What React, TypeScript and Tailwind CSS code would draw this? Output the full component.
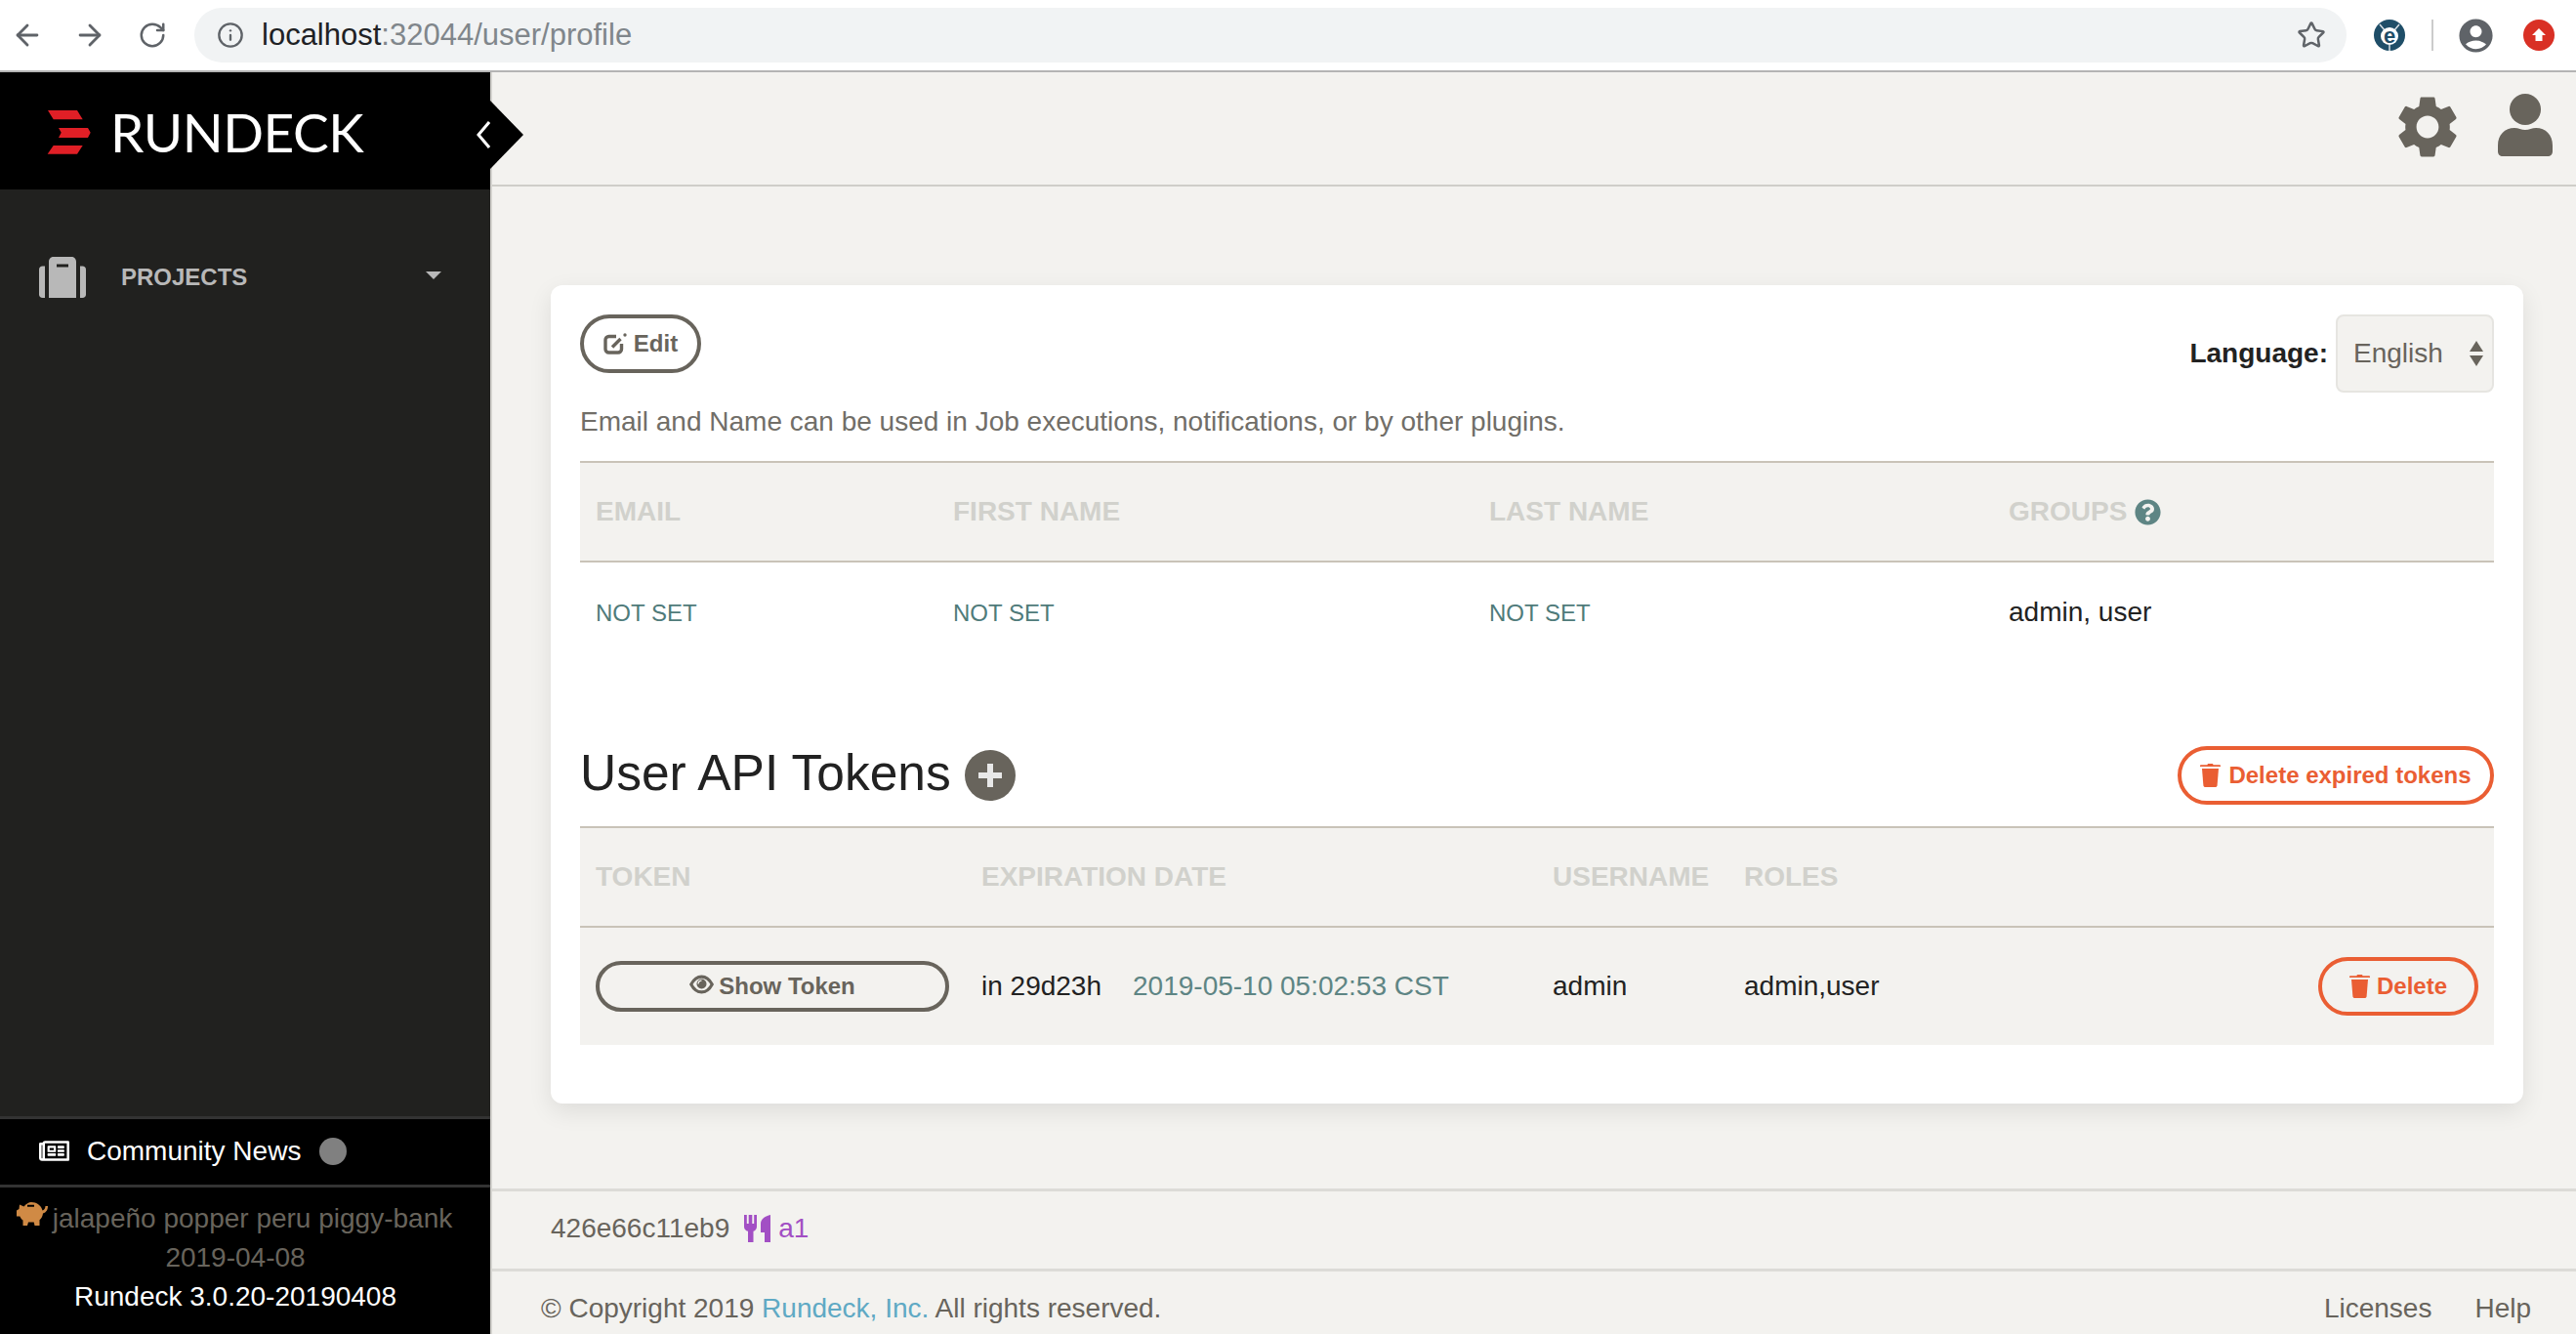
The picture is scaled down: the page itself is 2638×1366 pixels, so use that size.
import React from 'react';
import { ArrowLeft, ArrowRight, RotateCw, Info, Star } from 'lucide-react';
import { MdAccountCircle, MdSettings } from 'react-icons/md';
import { FaRegNewspaper, FaQuestionCircle } from 'react-icons/fa';

// Small inline icons the icon packages have no close match for
const TrashIcon: React.FC<{ className?: string }> = ({ className }) => (
  <svg viewBox="0 0 21 24" className={className} fill="currentColor">
    <path d="M7.5 1.2C7.5.5 8 0 8.7 0h3.6c.7 0 1.2.5 1.2 1.2h6.4c.6 0 1.100.4 1.100 1v.8H0v-.8c0-.6.500-1 1.100-1z" />
    <path d="M2 5h17l-1.400 17.200c-.1 1-1 1.800-2 1.800H5.400c-1 0-1.900-.8-2-1.800z" />
  </svg>
);

const EyeIcon: React.FC<{ className?: string }> = ({ className }) => (
  <svg viewBox="0 0 26 20" className={className}>
    <path d="M1.800 10C5 4 9 1.800 13 1.800S21 4 24.200 10C21 16 17 18.200 13 18.200S5 16 1.800 10z" fill="none" stroke="currentColor" strokeWidth="3.200" />
    <circle cx="13" cy="9.500" r="5.200" fill="currentColor" />
    <path d="M9.500 9.500a3.500 3.500 0 0 1 3.500-3.500" fill="none" stroke="#f3f2ef" strokeWidth="1.400" />
  </svg>
);

const EditIcon = () => (
  <svg viewBox="0 0 24 22" className="w-[24px] h-[22px]" fill="none" stroke="currentColor">
    <path d="M13 3.500H5.500a3.500 3.500 0 0 0-3.500 3.500v9.500a3.500 3.500 0 0 0 3.500 3.500H15a3.500 3.500 0 0 0 3.500-3.500V11" strokeWidth="3.400" />
    <path d="M9 14.500l8.500-8.500" strokeWidth="3.400" />
    <circle cx="22" cy="2" r="1.700" fill="currentColor" stroke="none" />
  </svg>
);

const SuitcaseIcon = () => (
  <svg viewBox="0 0 48 42" className="w-[48px] h-[42px]" fill="#b8b8b8">
    <path d="M0 13c0-2 1.500-3.500 3.500-3.500H6V42H3.500C1.500 42 0 40.500 0 38.500z" />
    <path d="M42 9.500h2.500c2 0 3.500 1.500 3.500 3.500v25.500c0 2-1.500 3.500-3.500 3.500H42z" />
    <path fillRule="evenodd" d="M10 5c0-2.800 2-5 4.500-5h19C36 0 38 2.200 38 5v37H10zM18 7.500v3h12v-3z" />
  </svg>
);

const UserIcon = () => (
  <svg viewBox="0 0 56 64" className="w-[56px] h-[64px]" fill="#68645c">
    <circle cx="28" cy="16" r="16" />
    <path d="M0 53c0-11 7-18 17-18 4 0 7 2 11 2s7-2 11-2c10 0 17 7 17 18v6c0 3-2 5-5 5H5c-3 0-5-2-5-5z" />
  </svg>
);

const CutleryIcon = () => (
  <svg viewBox="0 0 27 28" className="w-[27px] h-[28px]" fill="#a24fc4">
    <path d="M0 0h2.800v9h1.900V0h3.600v9h1.900V0H13v12c0 2.500-1.500 4.200-3.500 4.800V28H4V16.800C1.500 16.200 0 14.500 0 12z" />
    <path d="M27 0v28h-6V18h-4V9c0-5 5-8 10-9z" />
  </svg>
);

const PigIcon = () => (
  <svg viewBox="0 0 32 24" className="w-[32px] h-[24px]" fill="#d08a45">
    <path
      fillRule="evenodd"
      d="M3 2.500l4.500 2C10 1.500 12.500 0 15 0c5.500 0 10 3 11.500 8.500 1.800-.5 2.800-2 3-4.500L32 4c0 3.500-1.500 6.500-5 7.500-.3 3-1.700 5.200-3.500 6.700V24h-5l-.8-3.500H12L11 24H6.500v-5.500C5 17.500 4 16 3.300 14.500H0V8.500l2.500-1.500zM11 2.800v2h7v-2z"
    />
  </svg>
);

const TableHead: React.FC<{ children: React.ReactNode }> = ({ children }) => (
  <div className="px-4 text-[28px] font-bold text-[#d1d1cc] flex items-center gap-[10px]">{children}</div>
);

const PillButton: React.FC<{ danger?: boolean; className?: string; children: React.ReactNode }> = ({ danger, className, children }) => (
  <button
    type="button"
    className={`flex items-center justify-center rounded-full border-[4px] text-[24px] font-bold ${
      danger ? 'border-[#ea5e33] text-[#ea5e33]' : 'border-[#68645c] text-[#68645c]'
    } ${className}`}
  >
    {children}
  </button>
);

const BrowserBar = () => (
  <div className="h-[74px] bg-white border-b-2 border-[#b4b4b4] flex items-center text-[#5f6368] shrink-0">
    <ArrowLeft size={34} strokeWidth={2} className="ml-[11px]" />
    <ArrowRight size={34} strokeWidth={2} className="ml-[30px]" />
    <RotateCw size={30} strokeWidth={2} className="ml-[32px]" />
    <div className="ml-[28px] w-[1002px] flex-1 h-[56px] bg-[#f1f3f4] rounded-full flex items-center">
      <Info size={28} strokeWidth={2} className="ml-[23px]" />
      <span className="ml-[18px] text-[31px] text-[#80868b]">
        <span className="text-[#202124]">localhost</span>:32044/user/profile
      </span>
      <Star size={30} strokeWidth={2} className="ml-auto mr-[21px]" />
    </div>
    <svg viewBox="0 0 32 32" className="w-[32px] h-[32px] ml-[28px]">
      <circle cx="16" cy="16" r="16" fill="#1f4e68" />
      <path d="M6 5l5 6M26 5l-5 6M16 26v6" stroke="#d7dfe4" strokeWidth="1.500" />
      <circle cx="16" cy="17" r="9" fill="#fff" />
      <text x="16" y="24" textAnchor="middle" fontSize="22" fontWeight="700" fontFamily="Liberation Sans" fill="#1f4e68">e</text>
    </svg>
    <div className="w-[2px] h-[32px] bg-[#cccccc] ml-[27px]" />
    <MdAccountCircle size={41} className="ml-[23px]" />
    <div className="ml-[28px] mr-[22px] w-[32px] h-[32px] rounded-full bg-[#d93025] flex items-center justify-center">
      <svg viewBox="0 0 16 16" className="w-[16px] h-[16px]" fill="#fff">
        <path d="M8 1l7 7h-3.500v6h-7V8H1z" />
      </svg>
    </div>
  </div>
);

const Sidebar = () => (
  <aside className="w-[502px] shrink-0 bg-[#21211f] flex flex-col relative">
    <div className="h-[120px] bg-black flex items-center shrink-0">
      <svg viewBox="0 0 45 45" className="w-[45px] h-[45px] ml-[48px] mt-[2px]" fill="#e01f26">
        <polygon points="1,0 31,0 36.700,9.300 6.700,9.300" />
        <polygon points="12,18 42,18 44.700,22.700 42,28 12,28 14.700,22.700" />
        <polygon points="6.700,36 36.700,36 31,44.700 0.700,44.700" />
      </svg>
      <span className="ml-[20px] mt-[2px] text-[55px] leading-none text-white font-['Lato',sans-serif] tracking-[-0.5px]">RUNDECK</span>
    </div>
    {/* collapse notch overlapping the top bar */}
    <svg viewBox="0 0 34 70" className="absolute left-[502px] top-[29px] w-[34px] h-[70px] z-10">
      <polygon points="0,0 34,35 0,70" fill="#000" />
    </svg>
    <svg viewBox="0 0 14 30" className="absolute left-[488px] top-[49px] w-[14px] h-[30px] z-20" fill="none" stroke="#fff" strokeWidth="3">
      <polyline points="13,2 2,15 13,28" />
    </svg>

    <div className="flex-1 flex items-start pl-[40px] pt-[69px] pr-[50px]">
      <SuitcaseIcon />
      <span className="ml-[36px] mt-[7px] text-[24px] leading-[28px] font-bold text-[#b8b8b8]">PROJECTS</span>
      <div className="ml-auto mt-[15px] w-0 h-0 border-x-[8px] border-x-transparent border-t-[8px] border-t-[#b8b8b8]" />
    </div>

    <div className="bg-black shrink-0">
      <div className="h-[70px] border-t-[3px] border-[#333333] flex items-center pl-[40px] pb-[2px]">
        <FaRegNewspaper size={31} color="#fff" />
        <span className="ml-[18px] text-[28px] text-white">Community News</span>
        <span className="ml-[19px] w-[28px] h-[28px] rounded-full bg-[#808080]" />
      </div>
      <div className="h-[153px] border-t-[3px] border-[#333333] pt-[12px] text-[28px] leading-[40px] text-center">
        <div className="text-[#68645c] relative pl-[15px]">
          <span className="absolute left-[17px] top-[3px]"><PigIcon /></span>
          jalapeño popper peru piggy-bank
        </div>
        <div className="text-[#68645c] -ml-[20px]">2019-04-08</div>
        <div className="text-white -ml-[20px]">Rundeck 3.0.20-20190408</div>
      </div>
    </div>
  </aside>
);

const Profile = () => (
  <section className="w-[2020px] ml-[60px] h-[838px] bg-white rounded-[12px] shadow-[0_8px_24px_rgba(0,0,0,0.09)] pt-[30px] px-[30px] shrink-0">
    <div className="h-[80px] flex items-start justify-between">
      <PillButton className="w-[124px] h-[60px] gap-[7px]">
        <EditIcon />
        Edit
      </PillButton>
      <div className="flex items-center gap-[8px]">
        <span className="text-[28px] font-bold text-[#222222]">Language:</span>
        <div className="w-[162px] h-[80px] bg-[#f3f2ef] border-2 border-[#e6e5e1] rounded-[8px] flex items-center pl-[16px] pr-[9px] justify-between">
          <span className="text-[28px] text-[#68645c]">English</span>
          <svg viewBox="0 0 14 26" className="w-[14px] h-[26px]" fill="#68645c">
            <polygon points="7,0 14,11 0,11" />
            <polygon points="0,15 14,15 7,26" />
          </svg>
        </div>
      </div>
    </div>
    <p className="mt-[11px] text-[28px] leading-[38px] text-[#716e68]">
      Email and Name can be used in Job executions, notifications, or by other plugins.
    </p>

    <div className="mt-[21px] grid grid-cols-[366px_549px_532px_513px] h-[104px] bg-[#f3f2ef] border-y-2 border-[#c9c3b8]">
      <TableHead>EMAIL</TableHead>
      <TableHead>FIRST NAME</TableHead>
      <TableHead>LAST NAME</TableHead>
      <TableHead>
        GROUPS <FaQuestionCircle size={27} color="#5e8584" className="-ml-[2px]" />
      </TableHead>
    </div>
    <div className="grid grid-cols-[366px_549px_532px_513px] h-[102px] items-center px-0 text-[24px] text-[#4f7b7a]">
      <div className="px-4 pt-[2px]">NOT SET</div>
      <div className="px-4 pt-[2px]">NOT SET</div>
      <div className="px-4 pt-[2px]">NOT SET</div>
      <div className="px-4 text-[28px] text-[#222222]">admin, user</div>
    </div>

    <div className="mt-[86px] h-[60px] flex items-center justify-between">
      <div className="flex items-center gap-[14px]">
        <h2 className="text-[51.5px] text-[#222222] -mt-[4px]">User API Tokens</h2>
        <span className="w-[52px] h-[52px] rounded-full bg-[#68645c] flex items-center justify-center">
          <svg viewBox="0 0 24 24" className="w-[24px] h-[24px]" fill="#e8e8e8">
            <path d="M9 0h6v9h9v6h-9v9H9v-9H0V9h9z" />
          </svg>
        </span>
      </div>
      <PillButton danger className="w-[324px] h-[60px] gap-[8px]">
        <TrashIcon className="w-[21px] h-[24px]" />
        Delete expired tokens
      </PillButton>
    </div>

    <div className="mt-[22px] grid grid-cols-[395px_585px_196px_784px] h-[104px] bg-[#f3f2ef] border-y-2 border-[#c9c3b8]">
      <TableHead>TOKEN</TableHead>
      <TableHead>EXPIRATION DATE</TableHead>
      <TableHead>USERNAME</TableHead>
      <TableHead>ROLES</TableHead>
    </div>
    <div className="grid grid-cols-[395px_585px_196px_784px] h-[120px] items-center bg-[#f3f2ef] text-[28px] text-[#222222]">
      <div className="px-4">
        <PillButton className="w-[362px] h-[52px] gap-[5px]">
          <EyeIcon className="w-[25px] h-[20px] -mt-[4px]" />
          Show Token
        </PillButton>
      </div>
      <div className="px-4">
        in 29d23h<span className="ml-[32px] text-[#5e8584]">2019-05-10 05:02:53 CST</span>
      </div>
      <div className="px-4">admin</div>
      <div className="px-4 flex items-center justify-between">
        admin,user
        <PillButton danger className="w-[164px] h-[60px] gap-[7px]">
          <TrashIcon className="w-[21px] h-[24px]" />
          Delete
        </PillButton>
      </div>
    </div>
  </section>
);

export default function App() {
  return (
    <div className="w-[2638px] h-[1366px] overflow-hidden flex flex-col bg-[#f3f2ef] font-['Liberation_Sans',sans-serif]">
      <BrowserBar />
      <div className="flex-1 flex min-h-0">
        <Sidebar />
        <main className="flex-1 flex flex-col border-l-2 border-[#d4d3cf] min-w-0">
          <div className="h-[117px] border-b-[2px] border-[#cfcec9] flex items-start justify-end shrink-0 text-[#68645c]">
            <MdSettings size={76} className="mt-[18px]" />
            <div className="mt-[22px] ml-[34px] mr-[24px]">
              <UserIcon />
            </div>
          </div>
          <div className="flex-1 pt-[101px]">
            <Profile />
          </div>
          <div className="h-[82px] border-t-[3px] border-[#dcdbd7] flex items-center pl-[60px] pb-[3px] text-[28px] text-[#68645c] shrink-0">
            426e66c11eb9
            <span className="ml-[15px]"><CutleryIcon /></span>
            <span className="ml-[8px] text-[#a24fc4]">a1</span>
          </div>
          <div className="h-[67px] border-t-[3px] border-[#dcdbd7] flex items-start pt-[19px] pl-[50px] pr-[46px] text-[28px] leading-[38px] text-[#68645c] shrink-0">
            <span>
              © Copyright 2019 <span className="text-[#5fa9c4]">Rundeck, Inc.</span> All rights reserved.
            </span>
            <span className="ml-auto">Licenses</span>
            <span className="ml-[44px]">Help</span>
          </div>
        </main>
      </div>
    </div>
  );
}
